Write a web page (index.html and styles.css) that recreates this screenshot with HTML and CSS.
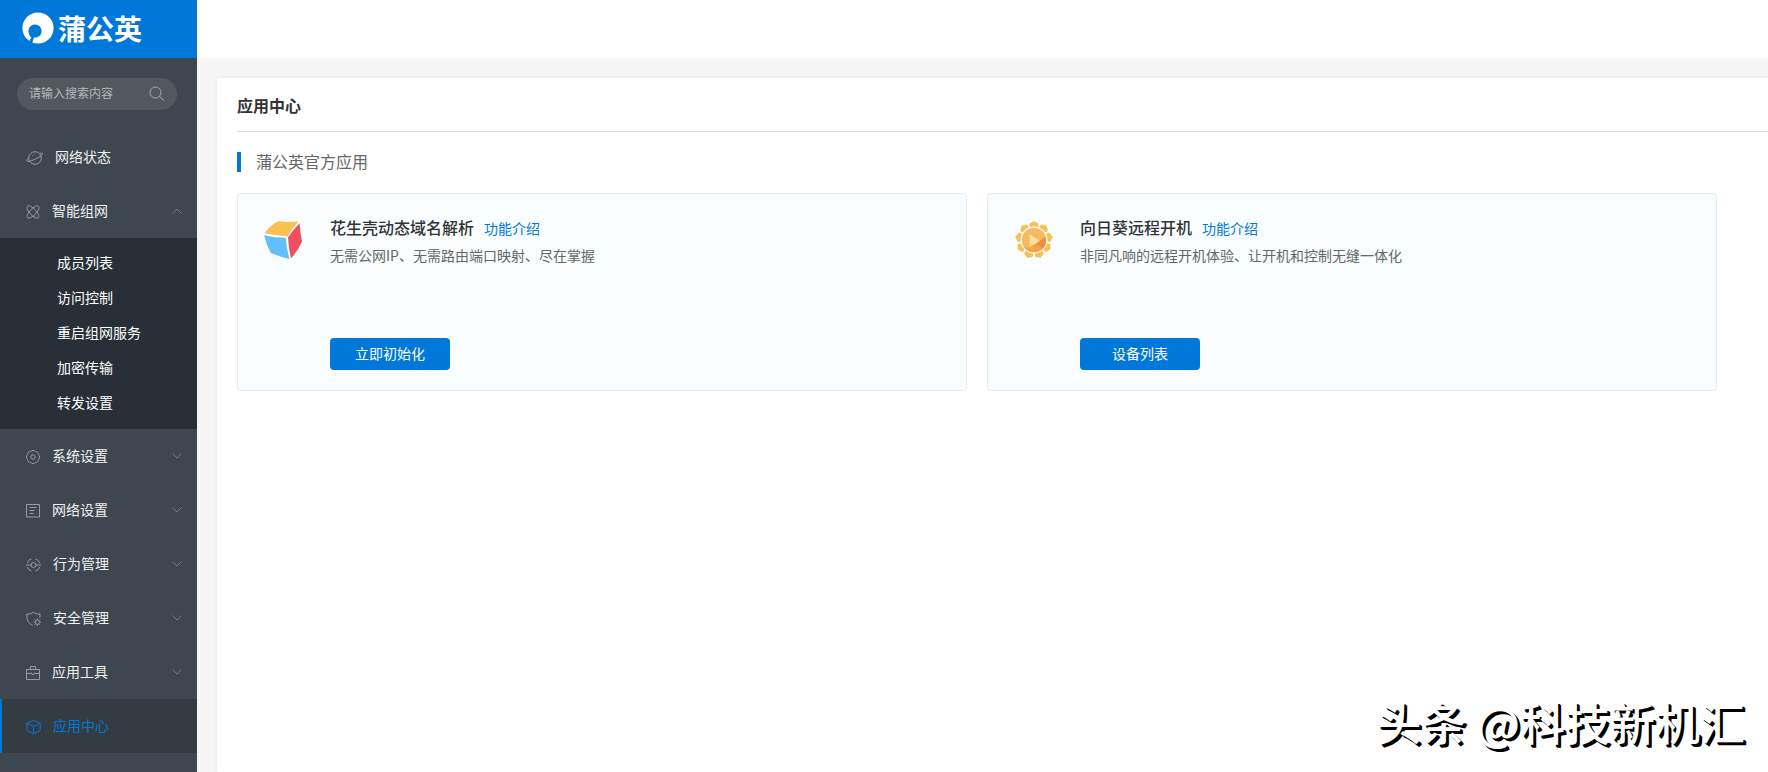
FILE: index.html
```html
<!DOCTYPE html>
<html lang="zh-CN">
<head>
<meta charset="utf-8">
<title>应用中心 - 蒲公英</title>
<link rel="stylesheet" href="styles.css">
</head>
<body>
<div class="app">
  <aside class="sidebar">
    <div class="brand">
      <svg class="brand-mark" width="32" height="32" viewBox="0 0 32 32" aria-hidden="true">
        <circle cx="16" cy="16" r="15.600" fill="#fff"/>
        <circle cx="13" cy="19" r="6.600" fill="#0078d9"/>
        <path d="M7 22L12.500 24 9.800 32 5 28.500 8.500 26.500z" fill="#0078d9"/>
        <path d="M7 22.500Q8.500 25 9.300 25.500L7.300 29 3.500 25z" fill="#fff"/>
      </svg>
      <span class="brand-name">蒲公英</span>
    </div>
    <form class="search">
      <input class="search-input" type="search" placeholder="请输入搜索内容" aria-label="请输入搜索内容">
      <button class="search-button" type="button" aria-label="搜索">
        <svg width="16" height="16" viewBox="0 0 16 16"><circle cx="6.500" cy="6.500" r="5.500"/><path d="M10.500 10.500L15 14.500"/></svg>
      </button>
    </form>
    <nav class="menu">
      <a class="menu-item" href="#">
        <svg class="icon" width="17" height="16" viewBox="0 0 17 16"><circle cx="9" cy="8" r="6.300"/><path d="M13.800 3.700C16 2.500 17 2.900 16.300 4.300 15 6.800 5.500 11.500 1.800 11.400 0 11.200.4 9.500 2.600 7.800"/><path d="M5.800 5.600h.9M8.400 4.300h.8"/></svg>
        <span>网络状态</span>
      </a>
      <button class="menu-item" type="button" aria-expanded="true">
        <svg class="icon" width="14" height="16" viewBox="0 0 14 16"><path d="M1 4.500C1 1.500 2.500 1 5 2.500c3 2 6 5 7.500 8 1.200 3-.2 4.500-3.500 3-3-1.500-6-5-7.500-7.500Q1 5.200 1 4.500zM13 4.500c0-3-1.500-3.500-4-2C6 4.500 3 7.500 1.500 10.500.3 13.500 1.700 15 5 13.500c3-1.500 6-5 7.500-7.500Q13 5.200 13 4.500z"/></svg>
        <span>智能组网</span>
        <svg class="chevron" width="10" height="6" viewBox="0 0 10 6"><path d="M.5 5.500L5 1l4.500 4.500"/></svg>
      </button>
      <div class="submenu">
        <a class="submenu-item" href="#">成员列表</a>
        <a class="submenu-item" href="#">访问控制</a>
        <a class="submenu-item" href="#">重启组网服务</a>
        <a class="submenu-item" href="#">加密传输</a>
        <a class="submenu-item" href="#">转发设置</a>
      </div>
      <button class="menu-item" type="button" aria-expanded="false">
        <svg class="icon" width="14" height="16" viewBox="0 0 14 16"><path d="M12.500 5.700A3 3 0 0 0 9.300 2.500 3 3 0 0 0 4.700 2.500 3 3 0 0 0 1.500 5.700 3 3 0 0 0 1.500 10.300 3 3 0 0 0 4.700 13.500 3 3 0 0 0 9.300 13.500 3 3 0 0 0 12.500 10.300 3 3 0 0 0 12.500 5.700z"/><circle cx="7" cy="8" r="2.200"/></svg>
        <span>系统设置</span>
        <svg class="chevron" width="10" height="6" viewBox="0 0 10 6"><path d="M.5.5L5 5 9.500.5"/></svg>
      </button>
      <button class="menu-item" type="button" aria-expanded="false">
        <svg class="icon" width="14" height="16" viewBox="0 0 14 16"><path d="M.5 1.500h13v12.500H.5zM3.500 4.500h7M3.500 7.500h5M3.500 10.500h4"/></svg>
        <span>网络设置</span>
        <svg class="chevron" width="10" height="6" viewBox="0 0 10 6"><path d="M.5.5L5 5 9.500.5"/></svg>
      </button>
      <button class="menu-item" type="button" aria-expanded="false">
        <svg class="icon" width="15" height="16" viewBox="0 0 15 16"><circle cx="7.500" cy="8" r="2.500"/><path d="M0 8h5M10 8h5M1.300 5.800A6.400 6.400 0 0 1 5.500 1.900M9.500 1.900a6.400 6.400 0 0 1 4.200 3.900M1.300 10.200a6.400 6.400 0 0 0 4.200 3.900M9.500 14.100a6.400 6.400 0 0 0 4.200-3.900"/></svg>
        <span>行为管理</span>
        <svg class="chevron" width="10" height="6" viewBox="0 0 10 6"><path d="M.5.5L5 5 9.500.5"/></svg>
      </button>
      <button class="menu-item" type="button" aria-expanded="false">
        <svg class="icon" width="15" height="16" viewBox="0 0 15 16"><path d="M6.800 14.300C2.500 12.500.6 9.500.8 3c2.600.3 4.700-.5 6.400-1.800C9 2.500 11.200 3.300 14 3q.1 2-.2 3.600"/><circle cx="11.300" cy="11.200" r="2.200"/><path d="M11.300 7.400v1.400M11.300 13.600V15M7.500 11.200h1.400M13.700 11.200h1.300M8.700 8.600l.9.900M13 12.900l.9.900M13.900 8.600l-.9.900M9.600 12.900l-.9.900"/></svg>
        <span>安全管理</span>
        <svg class="chevron" width="10" height="6" viewBox="0 0 10 6"><path d="M.5.5L5 5 9.500.5"/></svg>
      </button>
      <button class="menu-item" type="button" aria-expanded="false">
        <svg class="icon" width="14" height="16" viewBox="0 0 14 16"><path d="M.5 4.500h13v10H.5zM4.500 4V1.500h5V4M.5 8.500h4.800M8.700 8.500h4.800M5.300 7.500v1.200q1.700 1.900 3.400 0V7.500"/></svg>
        <span>应用工具</span>
        <svg class="chevron" width="10" height="6" viewBox="0 0 10 6"><path d="M.5.5L5 5 9.500.5"/></svg>
      </button>
      <a class="menu-item menu-item-active" href="#" aria-current="page">
        <svg class="icon" width="15" height="16" viewBox="0 0 15 16"><path d="M7.500 1.300l6.700 3v7.200l-6.700 3.200-6.700-3.200V4.300zM.8 4.300l6.700 3 6.700-3M7.500 7.300v7.400"/></svg>
        <span>应用中心</span>
      </a>
    </nav>
  </aside>
  <div class="content">
    <header class="topbar"></header>
    <main class="panel">
      <h1 class="panel-title">应用中心</h1>
      <h2 class="section-title">蒲公英官方应用</h2>
      <div class="cards">
        <article class="card">
          <svg class="card-icon" width="40" height="40" viewBox="0 0 40 40" aria-hidden="true">
            <path fill="#f7c24f" d="M1.500 13.200C5 8 10 3.500 15.500 1.200Q26 2.600 35.500 1.600 29 8 24.500 16.400 12 14.900 1.500 13.200z"/>
            <path fill="#62bffc" d="M1 15.200q11 2.500 21.700 2.600Q23.600 28 26.400 39 17 36.800 7.800 33 3.500 25 1 15.200z"/>
            <path fill="#f04f5e" d="M25 17.600Q30 9.500 36.600 3.200 37 12 39 21.500 35 31 28 38.300 25.500 28 25 17.600z"/>
          </svg>
          <div class="card-body">
            <div class="card-head">
              <h3 class="card-title">花生壳动态域名解析</h3>
              <a class="card-link" href="#">功能介绍</a>
            </div>
            <p class="card-text">无需公网IP、无需路由端口映射、尽在掌握</p>
            <button class="card-button" type="button">立即初始化</button>
          </div>
        </article>
        <article class="card">
          <svg class="card-icon" width="40" height="40" viewBox="-1 0 40 40" aria-hidden="true">
            <defs><path id="petal" fill="#fac053" d="M20 .8Q21 2.100 22.600 2.600C25.200 3.500 25 5.800 23.200 7.800H16.800C15 5.800 14.800 3.500 17.400 2.600Q19 2.100 20 .8z"/></defs>
            <use href="#petal"/><use href="#petal" transform="rotate(40 20 20)"/><use href="#petal" transform="rotate(80 20 20)"/><use href="#petal" transform="rotate(120 20 20)"/><use href="#petal" transform="rotate(160 20 20)"/><use href="#petal" transform="rotate(200 20 20)"/><use href="#petal" transform="rotate(240 20 20)"/><use href="#petal" transform="rotate(280 20 20)"/><use href="#petal" transform="rotate(320 20 20)"/>
            <circle cx="20" cy="20" r="12.900" fill="#f5bb62" stroke="#f9fdff" stroke-width="1.200"/>
            <path fill="#ee8c3c" d="M15.600 27.200L31.300 17A12.400 12.400 0 0 1 28 29.500z"/>
            <path fill="#f3a548" d="M15.600 27.200L22 24l7 4.500A12.400 12.400 0 0 1 10 27.300z"/>
            <path fill="#fde09b" d="M15.600 14.200v13L26 21z"/>
          </svg>
          <div class="card-body">
            <div class="card-head">
              <h3 class="card-title">向日葵远程开机</h3>
              <a class="card-link" href="#">功能介绍</a>
            </div>
            <p class="card-text">非同凡响的远程开机体验、让开机和控制无缝一体化</p>
            <button class="card-button" type="button">设备列表</button>
          </div>
        </article>
      </div>
    </main>
  </div>
  <div class="watermark">头条 @科技新机汇</div>
</div>
</body>
</html>
```
FILE: styles.css
```css
* {
  box-sizing: border-box;
}

body {
  margin: 0;
  background: #f5f5f5;
  color: #333;
  font: 14px/20px "Noto Sans CJK SC", sans-serif;
}

a {
  text-decoration: none;
}

button,
input {
  margin: 0;
  padding: 0;
  border: 0;
  background: none;
  color: inherit;
  font: inherit;
}

button {
  cursor: pointer;
}

.app {
  position: relative;
  display: grid;
  grid-template-columns: 197px 1fr;
  min-height: 100vh;
}

.sidebar {
  background: #3e464f;
}

.brand {
  display: flex;
  align-items: center;
  gap: 4px;
  height: 58px;
  padding: 0 0 2px 22px;
  background: #0078d9;
}

.brand-name {
  color: #fff;
  font-size: 28px;
  font-weight: 700;
  line-height: 40px;
}

.search {
  display: flex;
  align-items: center;
  justify-content: space-between;
  height: 32px;
  margin: 20px 20px 20px 17px;
  padding: 0 12px;
  border-radius: 16px;
  background: #51595f;
}

.search-input {
  flex: 1;
  min-width: 0;
  padding-bottom: 2px;
  outline: 0;
  color: #fff;
  font-size: 12px;
  line-height: 20px;
}

.search-input::placeholder {
  color: #b4b8bb;
  opacity: 1;
}

.search-button {
  display: flex;
}

.search-button svg {
  fill: none;
  stroke: #a9adb0;
}

.menu-item {
  display: flex;
  align-items: center;
  gap: 12px;
  width: 100%;
  height: 54px;
  padding: 0 15px 0 24px;
  border-left: 2px solid transparent;
  color: #f0f0f0;
}

.menu-item span {
  padding-bottom: 2px;
}

.icon {
  margin-top: 2px;
  fill: none;
  stroke: #9a9c9e;
}

.chevron {
  margin-left: auto;
  fill: none;
  stroke: #747a81;
}

.menu-item-active {
  border-left-color: #0078d9;
  background: #353c41;
  color: #0078d9;
}

.menu-item-active .icon {
  stroke: #0078d9;
}

.submenu {
  padding: 7px 0 9px;
  background: #282f37;
}

.submenu-item {
  display: block;
  padding-left: 57px;
  color: #fff;
  line-height: 35px;
}

.content {
  display: flex;
  flex-direction: column;
  min-width: 0;
}

.topbar {
  height: 58px;
  background: #fff;
}

.panel {
  flex: 1;
  margin: 20px 0 0 20px;
  padding-left: 20px;
  background: #fff;
  box-shadow: 0 0 4px rgba(0, 0, 0, 0.06);
}

.panel-title {
  margin: 0;
  padding: 15px 0 14px;
  border-bottom: 1px solid #dcdcdc;
  font-size: 16px;
  font-weight: 700;
  line-height: 24px;
}

.section-title {
  margin: 20px 0 21px;
  padding: 0 0 2px 15px;
  border-left: 4px solid #0078d9;
  color: #666;
  font-size: 16px;
  font-weight: 400;
  line-height: 18px;
}

.cards {
  display: grid;
  grid-template-columns: 1fr 1fr;
  gap: 20px;
  padding-right: 51px;
}

.card {
  display: flex;
  align-items: flex-start;
  gap: 27px;
  padding: 21px 20px 20px 25px;
  border: 1px solid #e3edf2;
  border-radius: 4px;
  background: #f9fdff;
}

.card-icon {
  flex: none;
  margin-top: 5px;
}

.card-head {
  display: flex;
  align-items: baseline;
  gap: 10px;
}

.card-title {
  margin: 0;
  font-size: 16px;
  font-weight: 500;
  line-height: 24px;
}

.card-link {
  color: #0078d9;
}

.card-text {
  margin: 6px 0 73px;
  color: #666;
}

.card-button {
  display: block;
  width: 120px;
  height: 32px;
  padding-bottom: 2px;
  border-radius: 4px;
  background: #0078d9;
  color: #fff;
}

.watermark {
  position: absolute;
  right: 23px;
  bottom: 18px;
  color: #fff;
  font-size: 45px;
  font-weight: 500;
  line-height: 64px;
  text-shadow: 2px 2px 0 #000, 3px 3px 0 #000;
}
```
